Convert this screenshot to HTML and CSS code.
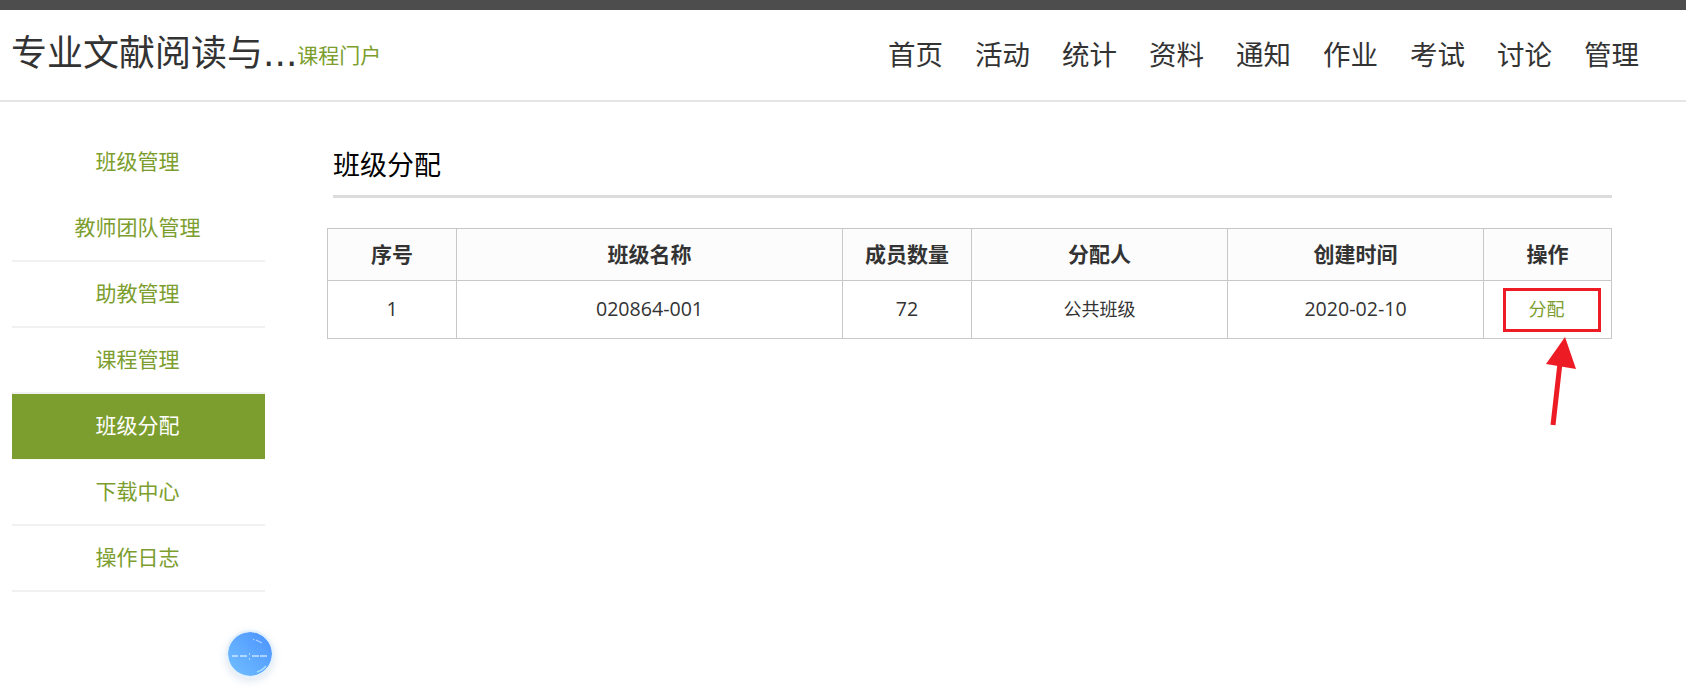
FILE: index.html
```html
<!DOCTYPE html>
<html lang="zh-CN">
<head>
<meta charset="utf-8">
<title>班级分配</title>
<link rel="stylesheet" href="styles.css">
</head>
<body>
<div class="topbar"></div>
<header class="header">
  <div class="brand"><span class="brand-title">专业文献阅读与...</span><a class="brand-sub">课程门户</a></div>
  <nav class="nav">
    <a>首页</a><a>活动</a><a>统计</a><a>资料</a><a>通知</a><a>作业</a><a>考试</a><a>讨论</a><a>管理</a>
  </nav>
</header>
<div class="layout">
  <aside class="side">
    <a class="side-item plain">班级管理</a>
    <a class="side-item">教师团队管理</a>
    <a class="side-item">助教管理</a>
    <a class="side-item">课程管理</a>
    <a class="side-item active">班级分配</a>
    <a class="side-item">下载中心</a>
    <a class="side-item">操作日志</a>
  </aside>
  <main class="main">
    <h2 class="page-title">班级分配</h2>
    <table class="grid">
      <colgroup>
        <col class="c1"><col class="c2"><col class="c3"><col class="c4"><col class="c5"><col class="c6">
      </colgroup>
      <thead>
        <tr><th>序号</th><th>班级名称</th><th>成员数量</th><th>分配人</th><th>创建时间</th><th>操作</th></tr>
      </thead>
      <tbody>
        <tr><td>1</td><td>020864-001</td><td>72</td><td class="small">公共班级</td><td>2020-02-10</td><td class="action"><a>分配</a></td></tr>
      </tbody>
    </table>
  </main>
</div>
<div class="redbox"></div>
<svg class="arrow" width="60" height="100" viewBox="0 0 60 100">
  <path d="M22 90 L29 28" stroke="#ed1c24" stroke-width="5" fill="none"/>
  <path d="M34 2 L15 29 L45 34 Z" fill="#ed1c24"/>
</svg>
<div class="ball">
  <svg width="44" height="44" viewBox="0 0 44 44">
    <path d="M4 24 H10 M12 24 H19 M24 24 H31 M32 24 H39" stroke="#fff" stroke-width="1" fill="none"/>
    <path d="M21.5 21.5 v1 M21.5 26.5 v1" stroke="#fff" stroke-width="1" fill="none"/>
    <path d="M25 7 l1.5 1 M28 8 l6 3" stroke="#fff" stroke-opacity=".65" stroke-width="1" fill="none"/>
    <path d="M29 40 Q35 38 38 34" stroke="#a8dcff" stroke-width="1.5" fill="none"/>
  </svg>
</div>
</body>
</html>
```
FILE: styles.css
```css
* { box-sizing: border-box; }
html, body { margin: 0; padding: 0; }
body {
  height: 694px;
  overflow: hidden;
  background: #fff;
  color: #333;
  font-family: "Open Sans", "Noto Sans CJK SC", sans-serif;
  position: relative;
}
.topbar { height: 10px; background: #4d4d4d; }
.header {
  height: 92px;
  border-bottom: 2px solid #e5e5e5;
  display: flex;
  align-items: center;
  justify-content: space-between;
  padding: 0 47px 0 11px;
}
.brand { display: flex; align-items: center; padding-bottom: 2px; }
.brand-title { font-size: 36px; line-height: 48px; color: #333; font-weight: 400; font-family: "DejaVu Sans", "Noto Sans CJK SC", sans-serif; }
.brand-sub { font-size: 21px; color: #7c9e2e; }
.nav { display: flex; gap: 32px; }
.nav a { font-size: 27.5px; line-height: 36px; color: #333; }
.layout { display: flex; padding: 28px 0 0 12px; }
.side { width: 253px; flex: none; display: flex; flex-direction: column; }
.side-item {
  height: 66px;
  line-height: 62px;
  text-align: center;
  font-size: 21px;
  color: #7c9e2e;
  border-bottom: 2px solid #f1f1f1;
  padding-right: 2px;
}
.side-item.plain { border-bottom-color: #fff; }
.side-item.active { background: #7c9e2e; color: #fff; border-bottom: 1px solid #fafafa; }
.main { width: 1285px; margin-left: 62px; }
.page-title {
  margin: 0 0 30px 6px;
  height: 68px;
  line-height: 70px;
  font-size: 27px;
  font-weight: 400;
  color: #000;
  border-bottom: 3px solid #dcdcdc;
}
.grid {
  border-collapse: collapse;
  table-layout: fixed;
  width: 1284px;
  font-size: 19.6px;
  color: #333;
}
.c1 { width: 129px; }
.c2 { width: 386px; }
.c3 { width: 129px; }
.c4 { width: 256px; }
.c5 { width: 256px; }
.c6 { width: 128px; }
.grid th, .grid td { border: 1px solid #c8c8c8; text-align: center; padding: 0 0 3px; }
.grid th { height: 52px; background: #fcfcfc; font-weight: 700; font-size: 21px; }
.grid td { height: 58px; }
.grid td.small { font-size: 18px; }
.grid td.action { font-size: 18px; color: #7c9e2e; padding-right: 2px; }
.redbox {
  position: absolute;
  left: 1503px;
  top: 288px;
  width: 98px;
  height: 44px;
  border: 3px solid #ed1c24;
}
.arrow { position: absolute; left: 1531px; top: 335px; }
.ball {
  position: absolute;
  left: 226px;
  top: 630px;
  width: 48px;
  height: 48px;
  border-radius: 50%;
  background: linear-gradient(45deg, #72c0ff, #4a92ff);
  background-clip: padding-box;
  border: 2px solid #e4f0fb;
  box-shadow: 0 3px 8px rgba(90, 130, 180, .2);
  display: flex;
  align-items: center;
  justify-content: center;
}
.ball svg { flex: none; }
```
